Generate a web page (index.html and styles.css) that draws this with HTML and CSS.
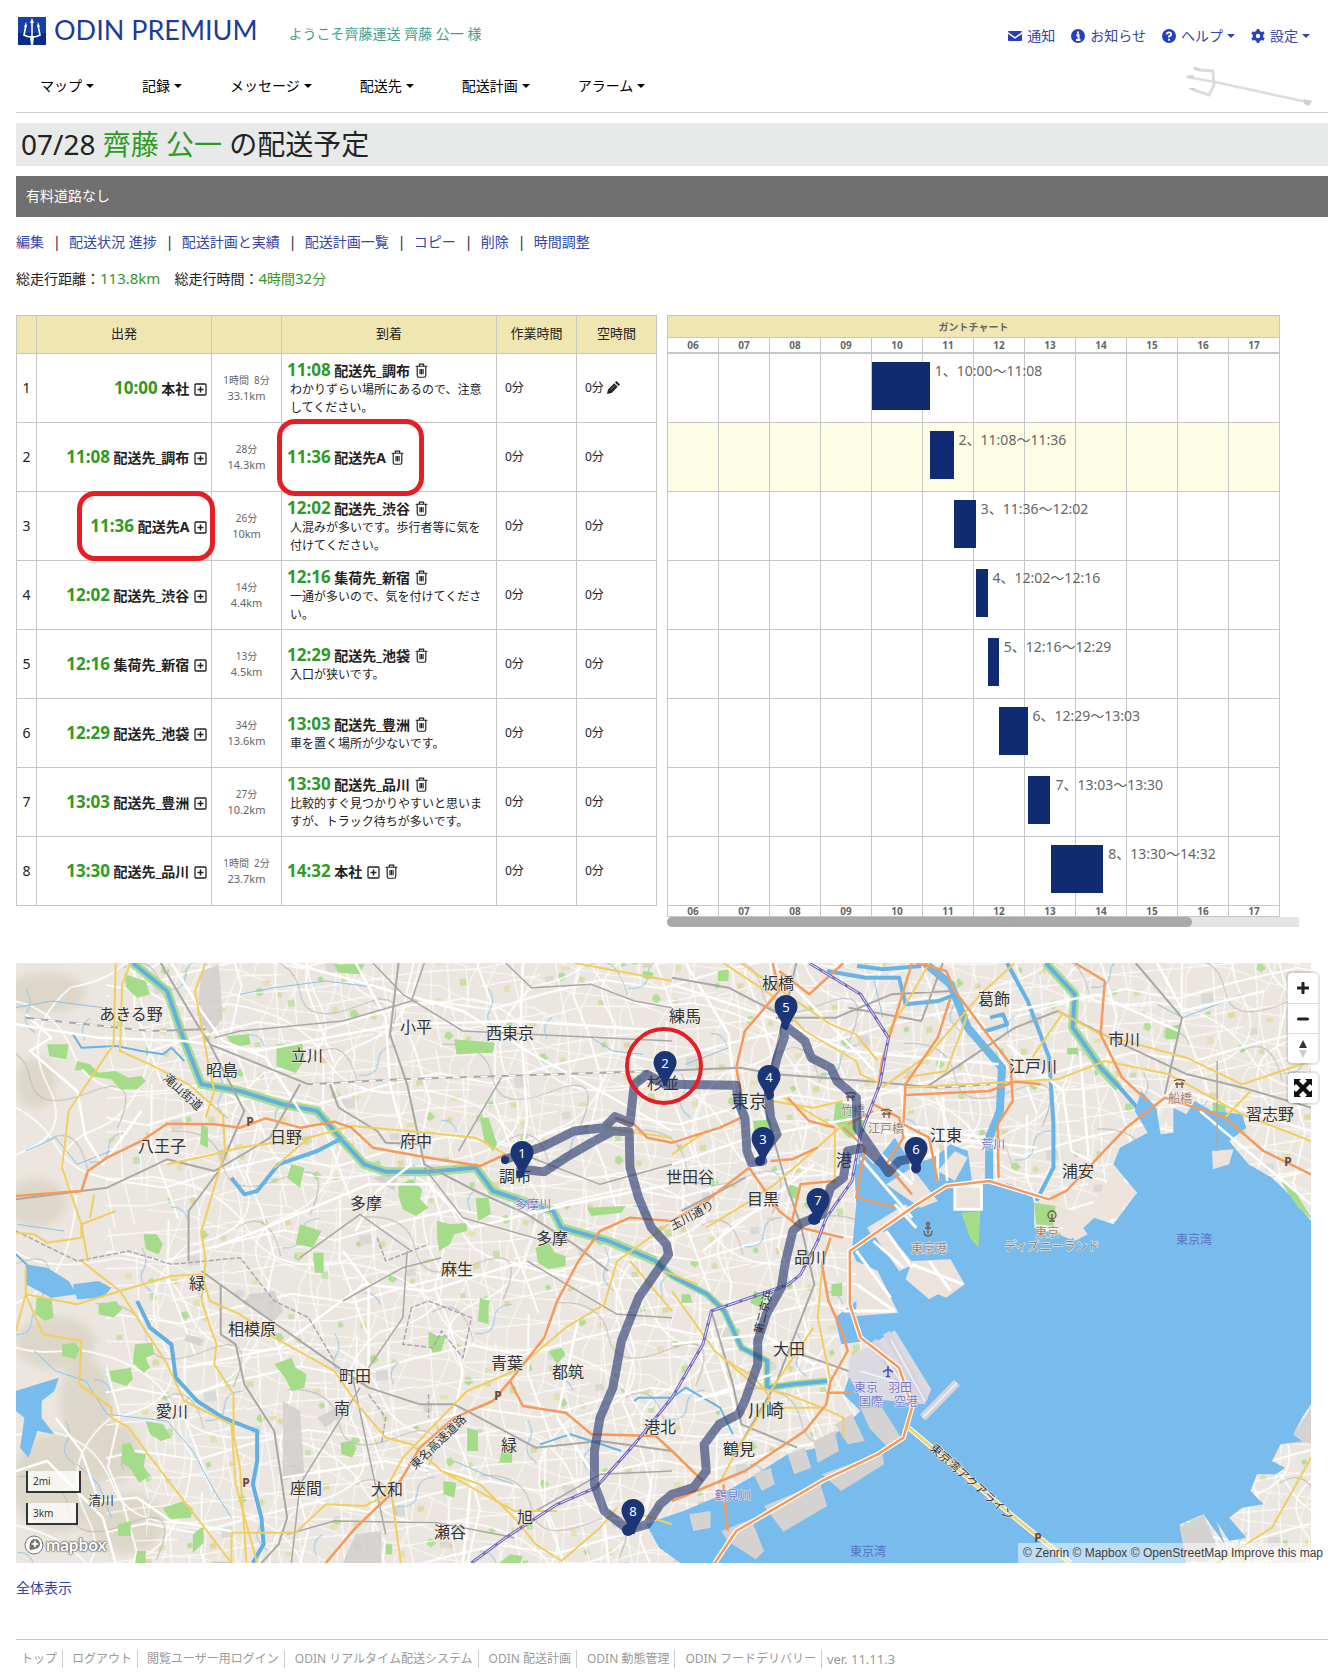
FILE: index.html
```html
<!DOCTYPE html>
<html lang="ja">
<head>
<meta charset="utf-8">
<title>ODIN PREMIUM 配送予定</title>
<meta name="viewport" content="width=device-width, initial-scale=1">
<link rel="stylesheet" href="styles.css">
</head>
<body>
<svg class="defs" aria-hidden="true">
  <symbol id="plus" viewBox="0 0 13 13"><rect x="1" y="1" width="11" height="11" rx="1" fill="none" stroke="currentColor" stroke-width="1.3"/><path d="M6.500 3.500v6M3.500 6.500h6" stroke="currentColor" stroke-width="1.500"/></symbol>
  <symbol id="trash" viewBox="0 0 12 14"><path d="M.5 3h11M4 3V1h4v2M2 3v8.500q0 1.800 1.500 1.800h5q1.500 0 1.500-1.800V3M4.600 5.500v5M6 5.500v5M7.500 5.500v5" fill="none" stroke="currentColor" stroke-width="1.100"/></symbol>
  <symbol id="pin" viewBox="0 0 26 40"><path d="M13 1a11.500 11.500 0 0 1 11.500 11.500C24.500 20 17 25 14.500 36h-3C9 25 1.500 20 1.500 12.500A11.500 11.500 0 0 1 13 1z" fill="#1b3576"/></symbol>
</svg>
<div class="page">
  <header>
    <div class="topbar">
      <a class="logo" href="#">
        <svg width="28" height="28" viewBox="0 0 28 28"><rect width="28" height="28" fill="#1740a6"/><path d="M0 16h28v12H0z" fill="#0b2c86"/><path d="M14 3v25M8 8l-2 10q3 2 8 2 5 0 8-2L20 8" fill="none" stroke="#fff" stroke-width="1.600"/><path d="M14 1l-2 5h4zM8 5l-2 5h3zM20 5l2 5h-3zM12 20h4l-1 8h-2z" fill="#fff"/></svg>
        <span>ODIN PREMIUM</span>
      </a>
      <p class="welcome">ようこそ齊藤運送 齊藤 公一 様</p>
      <nav class="tools" aria-label="ユーザー">
        <a href="#"><svg width="14" height="12" viewBox="0 0 14 12"><path d="M1 1h12q1 0 1 1L7 7 0 2q0-1 1-1zM0 4l7 4.800L14 4v6q0 1-1 1H1q-1 0-1-1z" fill="#263fc0"/></svg>通知</a>
        <a href="#"><svg width="14" height="14" viewBox="0 0 14 14"><circle cx="7" cy="7" r="7" fill="#263fc0"/><path d="M7 2.500v2.200M5.300 6.200H7.600v4.600M5 11h4.500" stroke="#fff" stroke-width="1.900" fill="none"/></svg>お知らせ</a>
        <button type="button"><svg width="14" height="14" viewBox="0 0 14 14"><circle cx="7" cy="7" r="7" fill="#263fc0"/><path d="M4.700 5.300Q4.900 3.300 7 3.300T9.300 5.300Q9.300 6.500 7 7.400V8.500M7 9.700v2" stroke="#fff" stroke-width="1.800" fill="none"/></svg>ヘルプ<i class="caret"></i></button>
        <button type="button"><svg width="14" height="14" viewBox="0 0 14 14"><circle cx="7" cy="7" r="3.800" fill="none" stroke="#263fc0" stroke-width="3.200"/><path d="M7 0v3M7 11v3M1 3.500l2.500 1.500M10.500 9l2.500 1.500M1 10.500L3.500 9M10.500 5L13 3.500" stroke="#263fc0" stroke-width="2.800"/></svg>設定<i class="caret"></i></button>
      </nav>
    </div>
    <nav class="menu" aria-label="メイン">
      <button type="button">マップ<i class="caret"></i></button>
      <button type="button">記録<i class="caret"></i></button>
      <button type="button">メッセージ<i class="caret"></i></button>
      <button type="button">配送先<i class="caret"></i></button>
      <button type="button">配送計画<i class="caret"></i></button>
      <button type="button">アラーム<i class="caret"></i></button>
      <svg class="trident" width="128" height="40" viewBox="0 0 128 40"><g fill="none" stroke="#dcdcdc" stroke-width="2"><path d="M9 2l6 2 13 1 1 14-5 10-15-5" stroke-width="3"/><path d="M2 11l28 5 92 20" stroke="#e0dcdc" stroke-width="2.500"/></g><path d="M0 10l9-1-2 4zM3 22l8 0-3 3zM8 1l8 2-4 2z" fill="#cfcfcf"/><path d="M119 33l8 2-3 5-5-2z" fill="#d4cfcf"/></svg>
    </nav>
  </header>

  <main>
    <h1>07/28 <span class="green">齊藤 公一</span> の配送予定</h1>
    <p class="notice">有料道路なし</p>
    <nav class="actions" aria-label="操作">
      <a href="#">編集</a><span>|</span><a href="#">配送状況 進捗</a><span>|</span><a href="#">配送計画と実績</a><span>|</span><a href="#">配送計画一覧</a><span>|</span><a href="#">コピー</a><span>|</span><a href="#">削除</a><span>|</span><a href="#">時間調整</a>
    </nav>
    <p class="totals"><span>総走行距離：<b class="green">113.8km</b></span><span>総走行時間：<b class="green">4</b><span class="green">時間</span><b class="green">32</b><span class="green">分</span></span></p>

    <div class="board">
      <table class="plan">
        <colgroup><col class="c-no"><col class="c-from"><col class="c-leg"><col class="c-to"><col class="c-min"><col class="c-min"></colgroup>
        <thead><tr><th></th><th>出発</th><th></th><th>到着</th><th>作業時間</th><th>空時間</th></tr></thead>
        <tbody>
          <tr><td class="no">1</td><td class="from"><b>10:00</b> 本社 <svg class="plus"><use href="#plus"/></svg></td><td class="leg">1時間&nbsp; 8分<br><span>33.1km</span></td><td class="to"><b>11:08</b> 配送先_調布 <svg class="trash"><use href="#trash"/></svg><p>わかりずらい場所にあるので、注意してください。</p></td><td class="min">0分</td><td class="min">0分 <svg class="pencil" width="13" height="13" viewBox="0 0 13 13"><path d="M9.500 0L13 3.500 11.500 5 8 1.500zM7.200 2.300l3.500 3.500-6.200 6.200L0 13l1-4.500z" fill="#222"/><path d="M3 9.500l5-5" stroke="#999" stroke-width=".8"/></svg></td></tr>
          <tr><td class="no">2</td><td class="from"><b>11:08</b> 配送先_調布 <svg class="plus"><use href="#plus"/></svg></td><td class="leg">28分<br><span>14.3km</span></td><td class="to"><b>11:36</b> 配送先A <svg class="trash"><use href="#trash"/></svg><i class="ring ring-to"></i></td><td class="min">0分</td><td class="min">0分</td></tr>
          <tr><td class="no">3</td><td class="from"><b>11:36</b> 配送先A <svg class="plus"><use href="#plus"/></svg><i class="ring ring-from"></i></td><td class="leg">26分<br><span>10km</span></td><td class="to"><b>12:02</b> 配送先_渋谷 <svg class="trash"><use href="#trash"/></svg><p>人混みが多いです。歩行者等に気を付けてください。</p></td><td class="min">0分</td><td class="min">0分</td></tr>
          <tr><td class="no">4</td><td class="from"><b>12:02</b> 配送先_渋谷 <svg class="plus"><use href="#plus"/></svg></td><td class="leg">14分<br><span>4.4km</span></td><td class="to"><b>12:16</b> 集荷先_新宿 <svg class="trash"><use href="#trash"/></svg><p>一通が多いので、気を付けてください。</p></td><td class="min">0分</td><td class="min">0分</td></tr>
          <tr><td class="no">5</td><td class="from"><b>12:16</b> 集荷先_新宿 <svg class="plus"><use href="#plus"/></svg></td><td class="leg">13分<br><span>4.5km</span></td><td class="to"><b>12:29</b> 配送先_池袋 <svg class="trash"><use href="#trash"/></svg><p>入口が狭いです。</p></td><td class="min">0分</td><td class="min">0分</td></tr>
          <tr><td class="no">6</td><td class="from"><b>12:29</b> 配送先_池袋 <svg class="plus"><use href="#plus"/></svg></td><td class="leg">34分<br><span>13.6km</span></td><td class="to"><b>13:03</b> 配送先_豊洲 <svg class="trash"><use href="#trash"/></svg><p>車を置く場所が少ないです。</p></td><td class="min">0分</td><td class="min">0分</td></tr>
          <tr><td class="no">7</td><td class="from"><b>13:03</b> 配送先_豊洲 <svg class="plus"><use href="#plus"/></svg></td><td class="leg">27分<br><span>10.2km</span></td><td class="to"><b>13:30</b> 配送先_品川 <svg class="trash"><use href="#trash"/></svg><p>比較的すぐ見つかりやすいと思いますが、トラック待ちが多いです。</p></td><td class="min">0分</td><td class="min">0分</td></tr>
          <tr><td class="no">8</td><td class="from"><b>13:30</b> 配送先_品川 <svg class="plus"><use href="#plus"/></svg></td><td class="leg">1時間&nbsp; 2分<br><span>23.7km</span></td><td class="to"><b>14:32</b> 本社 <svg class="plus"><use href="#plus"/></svg> <svg class="trash"><use href="#trash"/></svg></td><td class="min">0分</td><td class="min">0分</td></tr>
        </tbody>
      </table>

      <section class="gantt-pane" aria-label="ガントチャート">
        <div class="gantt">
          <h2>ガントチャート</h2>
          <div class="hours"><span>06</span><span>07</span><span>08</span><span>09</span><span>10</span><span>11</span><span>12</span><span>13</span><span>14</span><span>15</span><span>16</span><span>17</span></div>
          <div class="lane"><i style="--start:240;--len:68"></i><span>1、10:00～11:08</span></div>
          <div class="lane current"><i style="--start:308;--len:28"></i><span>2、11:08～11:36</span></div>
          <div class="lane"><i style="--start:336;--len:26"></i><span>3、11:36～12:02</span></div>
          <div class="lane"><i style="--start:362;--len:14"></i><span>4、12:02～12:16</span></div>
          <div class="lane"><i style="--start:376;--len:13"></i><span>5、12:16～12:29</span></div>
          <div class="lane"><i style="--start:389;--len:34"></i><span>6、12:29～13:03</span></div>
          <div class="lane"><i style="--start:423;--len:27"></i><span>7、13:03～13:30</span></div>
          <div class="lane"><i style="--start:450;--len:62"></i><span>8、13:30～14:32</span></div>
          <div class="hours foot"><span>06</span><span>07</span><span>08</span><span>09</span><span>10</span><span>11</span><span>12</span><span>13</span><span>14</span><span>15</span><span>16</span><span>17</span></div>
        </div>
        <div class="scroll"><i></i></div>
      </section>
    </div>

    <section class="map" aria-label="地図">
      <svg class="canvas" viewBox="0 0 1295 600" preserveAspectRatio="xMidYMid slice">
        <defs>
          <pattern id="streets" width="173" height="137" patternUnits="userSpaceOnUse" patternTransform="rotate(-7)">
            <g fill="none" stroke="#fff"><path stroke-width="1.800" d="M0 30L60 24 110 40 173 30M40 0L48 50 30 100 40 137M120 0L112 60 130 137M0 95L60 88 120 104 173 95"/><path stroke-width="1" d="M0 60L50 58 112 62 173 58M20 0L16 60 20 137M84 24L80 88 86 137M150 0L146 70 152 137M60 0L62 24M0 118L40 112 100 120 173 114M48 40L90 44M100 60L98 100M112 80L173 76M0 10L60 8 173 12M62 88L66 137"/></g>
            <path d="M70 48h7v5h-7zM22 70h8v4h-8zM135 82h6v7h-6z" fill="#e5dfb4"/><path d="M92 70h7v7h-7zM54 108h6v5h-6z" fill="#c9dfae"/><path d="M134 38h12v10h-12zM4 78h9v7h-9z" fill="#dbd9d5"/>
          </pattern>
          <pattern id="blocks" width="97" height="83" patternUnits="userSpaceOnUse" patternTransform="rotate(13)">
            <path d="M0 14L30 10 60 18 97 14M22 10L26 40 18 83M18 0L22 10M60 18L64 60 58 83M0 44L26 40 62 46 97 44M42 13L40 42M80 16L84 44 76 83M0 66L22 64 62 70 97 66M58 0L60 18M76 0L80 16" fill="none" stroke="#fbfaf8" stroke-width="1"/>
            <path d="M28 24l6-2 2 5-6 3zM68 52l5 1-1 5-5-1z" fill="#ded9a6"/><path d="M46 54l4-2 5 4-4 5-5-2zM6 30l4-3 3 4-4 3z" fill="#b4dd98"/>
          </pattern>
          <pattern id="lanes" width="211" height="189" patternUnits="userSpaceOnUse" patternTransform="rotate(24)">
            <path d="M0 40Q50 20 90 60T211 40M60 0Q30 60 80 100T60 189M150 0Q180 80 140 120T150 189M0 140Q70 120 110 150T211 140" fill="none" stroke="#fff" stroke-width="1.500"/>
            <path d="M0 90Q40 70 60 100T120 88 160 110M100 150Q120 120 150 160" fill="none" stroke="#b8b5b2" stroke-width="1"/>
            <path d="M20 20q12 8 10 20t16 16M170 110q-16 8-10 22t-12 20M90 20q-8 12 4 22M30 160q10-6 20 4" fill="none" stroke="#8fc3e6" stroke-width="1"/>
          </pattern>
          <filter id="soft"><feGaussianBlur stdDeviation="5"/></filter>
        </defs>
        <rect width="1295" height="600" fill="#ebe6df"/>
        <g filter="url(#soft)" fill="#ddd7c9"><ellipse cx="30" cy="30" rx="40" ry="20"/><ellipse cx="20" cy="240" rx="30" ry="24"/><ellipse cx="40" cy="380" rx="40" ry="26"/><ellipse cx="70" cy="440" rx="26" ry="44"/><ellipse cx="40" cy="520" rx="44" ry="50"/><ellipse cx="110" cy="560" rx="40" ry="30"/><ellipse cx="20" cy="120" rx="20" ry="26"/><ellipse cx="100" cy="490" rx="24" ry="30"/></g>
        <rect x="130" width="1165" height="600" fill="url(#blocks)"/>
        <rect x="90" width="1205" height="600" fill="url(#streets)"/>
        <rect width="1295" height="600" fill="url(#lanes)"/>

        <g class="geo" transform="matrix(.42857 0 0 .33333 -16 -12)">
          <g fill="#cfcdcb" opacity=".8"><path d="M470 60l40-20 10 160-30 50-30-60zM580 1030l60-10 20 60-20 30-70-50zM660 1350l40 30 10 190-50 20zM830 1750l60-10v96h-90zM435 1150l40 15-5 20-40-15zM740 1400l60-40 10 20-50 50zM870 680l60-20-10 60z"/></g>
          <g fill="#a5dc89">
            <path d="M290 70l50 20 10 40-30 10-25-30zM110 280l50 0-5 45-40-10zM180 330l30 10 20 25 40-5 30 20 30-5 10 15-20 25-40 0-20-30-50-10-15-20-20 5zM530 255l50-5 5 30-40 8zM645 280l60-4 5 50-20 40-45-20zM1060 265l95 10-5 30-85 5zM780 40l70 0-10 30-50-5zM470 520l15 10v60l-18-10zM680 640l30 10-10 60-30-30zM930 700l30-15 25 30-5 30 20 25-30 25-30-20-10-40zM700 820l50 20-20 50-40-10zM1020 810l30 10 40-5 0 25-30 10-10 30-25 20-5-40zM1110 740l30 0 5 50-30 20zM1250 890l30-15 15 30 25 10 0 30-40 10-25-20zM730 905l25 0v60h-20zM335 850l30 0 15 30-10 30-30-15zM1120 500l20 0 20 80-10 20-20-30zM1370 770l90-5-10 20-70 10z"/>
            <path d="M85 1040l35 0 5 60-20 10-22-20zM230 1060l40-10 15 25-20 25-35-10zM145 1180l30-5 12 20-12 30-30-10zM315 1180l40-5 5 35-20 10 10 30-15 15-25-30zM255 1260l50-10 5 35-15 20-35-15zM640 1240l40-20 10 30 25 20-5 40-30 10-15-40zM340 1410l40 10 20 40-25 10-25-20zM285 1480l20-5 10 30 25 5-5 35 15 30-25 20-20-40-20-20zM795 1475l25-5 12 20-10 30-25-10zM1035 1590l30 5-5 45-25-10zM1090 1430l25 10v60h-25zM1120 1040l20 10v70l-25-10zM1000 1140l20 15 20 0-10 45-20 5-10-25zM380 1670l50-20 20 25-5 25-50 5zM450 1750l25-25 0 50-25 30zM320 1800l20 0v36h-25zM1170 1500l25 5 0 30-30 0zM1190 1810l30 5-5 21-50 0zM900 1780l15 0v30h-15zM275 1720l30-10v45h-30z"/>
            <path d="M1758 510l40-5 8 50-25 10-22-15zM1950 450l60 20 10 70-40 20-35-50zM2490 290l25 0v20h-25zM2720 230l35-10-10 45-25 0zM2830 450l30 5v45l-30-15zM1940 1000l25-5v40h-25zM1760 1020l25 10-10 40-25-15zM1675 60l25-5v35h-25zM1840 700l25 10-5 35-20-10zM2060 690l20 5-10 25-20 0zM1280 1200l30-10 10 20-20 30zM1320 1250l25 0-5 25-20-5zM1590 1030l20 0 5 25-25 0zM1500 60l25 5-5 20-20-5z"/>
          </g>
          <!-- rivers -->
          <g fill="none" stroke-linejoin="round">
            <path stroke="#a9dc92" stroke-width="9" d="M310 36L390 120 430 270 470 400 560 420 660 460 740 480 800 570 850 640 900 662 1000 662 1110 650 1150 720 1290 780 1310 830 1420 870 1530 930M2440 36L2508 130 2503 230 2568 350 2610 410"/>
            <path stroke="#a9dc92" stroke-width="7" d="M1530 930L1568 975 1650 1030 1690 1080 1730 1190 1790 1230 1790 1310 1850 1300 1930 1290"/>
            <path stroke="#62b0e2" stroke-width="4" d="M310 36L390 120 430 270 470 400 560 420 660 460 740 480 800 570 850 640 900 662 1000 662 1110 650 1150 720 1290 780 1310 830 1420 870 1530 930 1568 975 1650 1030 1690 1080 1730 1190 1790 1230 1790 1310 1850 1300 1930 1290M2440 36L2508 130 2503 230 2568 350 2620 420 2680 510M320 1050L350 1130 400 1180 410 1280 460 1350 520 1400 600 1440 600 1530 590 1600 610 1700 615 1780 590 1836"/>
            <path stroke="#6fb8ea" stroke-width="8" d="M2158 36L2218 100 2258 230 2338 350 2333 480 2308 560 2308 700"/>
            <path stroke="#68b3e6" stroke-width="4" d="M2000 45L2060 55 2150 45M2350 36L2398 150 2448 320 2458 520 2458 650 2418 750M1930 60L2020 80 2098 80 2113 160 2190 150 2230 130M2310 200L2340 190 2350 220 2300 240M540 680L570 730 600 720 650 640 740 600 800 560"/>
            <path stroke="#68b3e6" stroke-width="2" d="M170 250L190 290 270 285 330 300 380 310 400 290 430 330M1480 1350L1490 1340 1568 1340 1600 1310 1680 1370 1710 1450M1260 1480L1330 1450 1380 1470 1450 1500M37 910L70 950 100 960"/>
            <path stroke="#8cc3e8" stroke-width="1" d="M37 170L120 150 240 170M60 600L130 560 180 640 260 600M40 820L150 840M80 1200L130 1260 200 1290 250 1390 390 1410 450 1500 500 1620 540 1700M560 130L640 110 760 90 880 110M1380 260L1430 300 1500 310M180 1540L230 1600 260 1700M1060 1530L1130 1570 1200 1600M2040 90L2060 200M1600 340L1700 290M2700 160L2760 200 2900 130"/>
          </g>
          <!-- bay and lakes -->
          <g fill="#78bbed">
            <path d="M60 940l50 10 50 40 20 40-60 10-60-40zM170 1000l60-10 30 20-20 30-60 5zM37 1320l50-20 50-20-10 40-30 30 0 50 30 50-40-10-20 80-20-30 10-90-20-20z"/>
            <path transform="translate(1568 0)" d="M425 650L440 600 470 640 520 560 560 640 610 620 650 580 690 600 700 690 750 690 790 700 840 730 850 790 845 830 900 850 930 865 985 800 1030 820 1085 725 1030 640 1045 590 1110 545 1080 480 1095 420 1130 470 1140 550 1170 545 1170 470 1200 490 1220 450 1260 480 1330 490 1340 530 1300 570 1345 640 1400 680 1440 730 1491 810V1360L1470 1400 1450 1450 1470 1470 1420 1480 1400 1530 1430 1550 1410 1570 1365 1570 1350 1620 1380 1660 1330 1670 1300 1700 1340 1760 1300 1770 1270 1710 1290 1780 1240 1690 1185 1720 1200 1836H20L-30 1790-60 1720-20 1700 27 1680 100 1640 190 1575 270 1510 340 1490 390 1440 440 1380 400 1330 420 1250 470 1200 450 1170 395 1180 380 1100 430 1050 440 960 420 900 430 760z"/>
          </g>
          <g transform="translate(1568 0)">
            <g fill="#ece4dc"><path d="M455 830l90-70 15 20-90 80zM470 850l30-10 65 100-35 20zM545 985l15-55 90-5 33 75-43 40-20-10-20 15zM845 750l55 15 85 35-55 65-20-40-65-5zM1260 600l50-5-10 45-38 15zM430 930l50 30 48 125-98 10zM500 700l60-50 60 100-40 20zM620 660l40-60 30 20-30 70zM660 705l62-5-2 75-60 2zM1030 660l55 65-60 80-50-30zM900 780l30 0 40 70-30 20z"/></g>
            <g fill="#d5d3d2"><path d="M215 1665l130-70 17 70-102 77zM350 1570l140-65 5 35-100 80zM115 1740l70-35 30 95-20 25-65-55zM330 1470l50-30 10 60-50 35zM270 1510l40-20 15 60-40 20zM190 1570l40-20 10 50-30 20zM440 1370l50 0 50 100-40 15-40-55zM1450 1450l41-80v110zM1185 1730l55-40 30 90-20 50h-50zM40 1690l50-10 0 50-40 10zM380 1420l40-30 30 80-40 10z"/></g>
            <path d="M415 1220l105-82 85 177-15 45-150-20-30-70z" fill="#dbd9e2"/><path d="M585 1400L665 1295M590 1350L500 1145M560 1340L470 1170" fill="none" stroke="#d5d3de" stroke-width="8"/><path d="M585 1400L665 1295M590 1350L510 1165M560 1340L480 1190M540 1300L440 1260" fill="none" stroke="#f4f3f6" stroke-width="1.500"/>
            <path d="M845 755l50 10-5 60-40-5zM675 785l45-5-5 110-20-30zM1420 690l30 20 41 90-30-30z" fill="#a5dc89"/>
            <path d="M470 870l70 80M500 840l60 110M560 940l120 60M600 930l50 90M440 620L560 800M480 600l80 100M660 705h62v70h-62zM520 760l50 70M400 1080l120 0M430 1000l90 80M620 590v100M430 900l80 140" fill="none" stroke="#fff" stroke-width="3"/>
          </g>
          <!-- white arterials -->
          <g fill="none" stroke="#fff" stroke-width="2.500"><path d="M37 220L230 260 430 270 600 300 930 220 1210 210 1568 240M60 190L120 260 70 300 180 420 200 560 240 640 330 480M400 36L470 180 520 270 620 320 720 520M680 36L1080 180 1230 300 1400 420 1568 540M830 36L900 200 910 400 960 640 880 720 830 840M1220 36L1215 220 1230 500 1210 680M500 890L620 830 860 700 1000 700 1100 830 1330 760 1568 700M430 1250L650 1190 850 1000 1000 1020 1200 940 1400 1000M130 1400L190 1500 230 1650 320 1640 400 1710 540 1740M37 1560L110 1530 240 1700 270 1836M1420 1836L1400 1600 1300 1400 1350 1100M660 1580L900 1530 1000 1560M1080 1836L1100 1580 980 1540M860 1260L860 1000 800 900"/><path d="M1568 100L1800 200 1980 300 2330 340M1600 36L1700 250 1720 500M1800 36L2040 360M1568 640L1750 560 2000 500 2300 560M1640 900L1900 640M2000 400V640M2100 400L2130 690M2200 420L2210 690M2040 540L2420 590M2350 280L2480 420 2500 600 2560 640M2360 180L2560 130 2750 240M2700 36L2760 180 2950 120M1568 1180L1780 1150 1900 1240M1620 1350L1800 1270M1650 1100L1700 1300 1740 1500M2520 300L2540 620M2760 420L3059 540M2800 480L3059 760"/></g>
          <!-- railways -->
          <g fill="none" stroke="#aaa8a6" stroke-width="2" stroke-linejoin="round"><path d="M37 745L250 710 390 625 500 660 580 600 630 560 700 400M60 200L130 210 350 240 480 235M375 36L460 220 490 280 720 400 930 385 1530 360 1728 350 1810 370 2020 390 2188 410 2310 400M770 400L790 470 880 540 900 575 980 580M490 280L570 480 510 660 440 780 440 930M930 36L910 250 950 400 990 640 1110 720 1230 790 1340 880 1420 960M470 960L600 1080 790 1250 860 1310 980 1360 1060 1360 1250 1490 1400 1470 1568 1500M515 1000L515 1150 550 1180 570 1300 640 1440 670 1700 650 1780 610 1836"/><path stroke-width="1.500" d="M500 260L560 240 800 210 960 150 990 36M870 36L940 130 1080 240 1568 270M1170 380L1070 600M990 650L1080 800 1300 880M840 1310L700 1600 680 1836M670 1750L780 1710 1020 1715 1200 1760M1568 1560L1400 1570 1250 1680M800 1050L940 950 1030 920M700 920L840 790 960 900M1180 36L1240 110 1380 100 1480 150 1568 170M1200 600L1400 700 1568 640M2840 330L2840 600M820 1260L900 1750M1230 930L1440 1090 1568 1100M860 1250L940 1100 950 900"/><path d="M1858 36L1810 300 1780 450 1835 700 1868 820 1900 1000 1810 1300 1718 1500M2160 410L2368 230 2468 180 2620 280 2770 370 2900 410 3059 470M2650 36L2758 200 2718 430M1810 200L1950 200 2080 130 2220 120M1980 170L2150 210 2200 36M1568 80L1700 110 1850 210M1590 780L1740 680M1660 1080L1710 1300 1730 1420 1860 1490M1870 1210L1980 1260"/></g>
          <path d="M80 204L130 210 350 240 400 240M730 400L930 385 1530 360M2188 410L2310 400" fill="none" stroke="#fff" stroke-width="1.500" stroke-dasharray="7 7"/>
          <path d="M37 840L100 880 180 930 300 900 400 940 560 920 640 1050 720 1100 780 1230M960 1070L940 1180 1010 1190 1030 1140 1080 1220 1100 1100 1000 1050 960 1070M880 860L900 930 1000 880M860 1330L900 1400 890 1480M1000 1330L1000 1400" fill="none" stroke="#a9a7b4" stroke-width="1.500" stroke-dasharray="5 2"/>
          <!-- national roads -->
          <g fill="none" stroke="#f0cf60" stroke-width="2" stroke-linejoin="round">
            <path d="M270 36L265 280 160 480 145 650 190 820 205 930M305 36L285 100 280 300 350 340 440 400 520 490 525 600 470 840 480 930 470 1050 505 1180 500 1240 545 1330 545 1450 560 1550 575 1836M480 36L455 120 485 330 500 420 480 500M37 845L80 850 110 875 190 860 190 820 270 780M37 1140L60 1030 180 1060 280 1020 400 975 470 970 490 1050 560 1090 640 1160 780 1260 840 1370 900 1460 960 1480 1030 1560 1200 1680 1300 1680M190 930L280 1020 390 1240 430 1350 540 1420 550 1600 600 1836M60 950L60 1030 100 1150 190 1170 185 1300 260 1370 260 1400 300 1430 340 1500 540 1836 540 1745 690 1745 760 1660 850 1665 890 1640 940 1520 1000 1440 1090 1320 1200 1260 1320 1130 1410 1060 1440 930M1030 1560L1120 1600 1200 1700 1250 1780 1310 1830 1400 1730 1440 1670M390 640L500 610 560 590 720 560 820 525 1000 545 1110 560 1180 610M1430 535L1568 560M220 730L210 800M1470 1680L1568 1720M1340 36L1568 90M1440 930L1560 820M640 650L720 560M915 1640L935 1836M1470 930L1568 1080"/>
            <path transform="translate(1568 0)" d="M120 36L230 130 310 240 430 330 440 370 490 400M160 36L370 220 430 250 480 330M800 36L720 130 600 310 490 410M500 250L560 130 600 36M540 410L900 385 1010 330 1160 370 1330 490 1491 570M540 380L640 360 690 190M900 180L1000 250 1200 320 1330 400 1491 330M910 190L840 320M230 450L330 470 400 450M400 520L330 600 240 700 170 760 80 830M0 1020L100 1200 200 1310 270 1330 350 1370M-20 960L60 1000M350 960L340 1100 370 1290M180 1260L230 1340 150 1500 110 1600M230 1320L330 1130M1400 1730L1491 1520M1270 1836L1400 1730M350 1370L400 1400 400 1460M0 610L80 540M260 440L380 530 380 700M260 1370H350M130 1230L180 1270M1290 500L1350 420"/>
          </g>
          <!-- expressways -->
          <g fill="none" stroke="#fff" stroke-width="5"><path transform="translate(1568 0)" d="M100 1836L150 1740 350 1590 480 1510 540 1460 560 1370 530 1250 440 1160 415 1060 415 900 560 770 640 705 740 690 880 745"/><path d="M2120 1430L2368 1700 2498 1836"/></g>
          <g fill="none" stroke="#f69a5c" stroke-width="2.500" stroke-linejoin="round">
            <path d="M37 735L190 720 205 660 250 620 330 570 390 518 500 520 560 530 620 502 700 530 780 512 820 530 870 590 1000 620 1120 645 1180 610M1435 500L1480 520 1510 560 1568 575 1680 530 1730 500M760 1836L830 1730 920 1620 980 1490 1060 1400 1150 1350 1190 1290 1270 1160 1300 1050 1350 930 1400 840 1470 800 1568 810 1648 750 1748 650M1190 1290L1220 1365 1320 1385 1380 1450 1530 1455 1568 1500 1640 1590"/>
            <path transform="translate(1568 0)" d="M100 1836L150 1740 350 1590 480 1510 540 1460 560 1370 530 1250 440 1160 415 1060 415 900 560 770 640 705 740 690 880 745 920 720 1060 530 1150 440 1290 500 1380 600 1491 670M235 36L250 120 170 240 150 350 165 450M400 36L320 130 250 60M570 36L640 60 660 120 730 240 790 340 795 450 760 520 762 680M650 140L620 260 545 400 540 520 600 560 620 690M940 36L1010 90 1000 250 1050 380 1110 450M545 432L740 420 800 392 860 400M370 860L350 940 365 1050 400 1150 410 1200 370 1290 360 1360 310 1440 170 1560 0 1650M180 650L250 780 300 830 400 860M230 630L280 625 340 590M380 530L320 510 270 440M400 530L450 590 430 740 520 770M470 460L530 500 540 560 500 640 560 730M280 810L300 700 380 690M120 1600L130 1740M360 1325H420M560 36L490 330 480 420M410 520L470 480"/>
          </g>
          <path d="M2120 1430L2368 1700 2498 1836" fill="none" stroke="#edd277" stroke-width="3"/>
          <path d="M1888 36L2008 130 2073 260 2053 400 2008 550 1988 690 1928 800 1908 870 1868 970 1840 1000 1660 1080 1640 1180 1568 1340 1480 1480 1390 1610 1300 1660 1180 1760 1100 1836" fill="none" stroke="#706bc0" stroke-width="3"/>
          <path d="M1888 36L2008 130 2073 260 2053 400 2008 550 1988 690 1928 800 1908 870 1868 970 1840 1000 1660 1080 1640 1180 1568 1340 1480 1480 1390 1610 1300 1660 1180 1760 1100 1836" fill="none" stroke="#e6e4f4" stroke-width="1" stroke-dasharray="12 3"/>
        </g>

        <g class="places">
          <text x="115" y="57">あきる野</text><text x="400" y="70">小平</text><text x="494" y="76">西東京</text><text x="669" y="59">練馬</text><text x="762" y="26">板橋</text><text x="978" y="42">葛飾</text><text x="1108" y="82">市川</text><text x="1017" y="109">江戸川</text><text x="291" y="98">立川</text><text x="206" y="113">昭島</text><text x="647" y="126">杉並</text><text class="big" x="733" y="145">東京</text><text x="930" y="178">江東</text><text x="1254" y="157">習志野</text><text x="270" y="180">日野</text><text x="146" y="189">八王子</text><text x="400" y="184">府中</text><text x="828" y="203">港</text><text x="1062" y="214">浦安</text><text x="499" y="219">調布</text><text x="674" y="220">世田谷</text><text x="747" y="242">目黒</text><text x="350" y="246">多摩</text><text x="536" y="281">多摩</text><text x="794" y="300">品川</text><text x="441" y="312">麻生</text><text x="181" y="326">緑</text><text x="236" y="372">相模原</text><text x="339" y="419">町田</text><text x="773" y="392">大田</text><text x="491" y="406">青葉</text><text x="552" y="415">都筑</text><text x="326" y="451">南</text><text x="156" y="454">愛川</text><text class="big" x="750" y="454">川崎</text><text x="644" y="470">港北</text><text x="723" y="492">鶴見</text><text x="493" y="488">緑</text><text x="290" y="531">座間</text><text x="371" y="532">大和</text><text class="mid" x="85" y="542">清川</text><text x="434" y="575">瀬谷</text><text x="509" y="560">旭</text>
        </g>
        <g class="places small brown"><text x="837" y="152">竹橋</text><text x="870" y="170">江戸橋</text><text x="1164" y="140">船橋</text><text x="913" y="290">東京港</text><text x="1031" y="274">東京</text><text x="1036" y="288">ディズニーランド</text></g>
        <g class="places small violet"><text x="977" y="186">荒川</text><text x="517" y="246">多摩川</text><text x="717" y="537">鶴見川</text><text x="850" y="429">東京</text><text x="884" y="429">羽田</text><text x="855" y="443">国際</text><text x="890" y="443">空港</text></g>
        <g class="places small sea"><text x="1178" y="281">東京湾</text><text x="852" y="593">東京湾</text></g>
        <g class="places small"><text transform="translate(164 132) rotate(42)">滝山街道</text><text transform="translate(678 256) rotate(-28)">玉川通り</text><text transform="translate(425 482) rotate(-44)">東名高速道路</text><text transform="translate(953 522) rotate(42)">東京湾アクアライン</text></g>
        <g class="parking"><text x="234" y="163">P</text><text x="482" y="437">P</text><text x="230" y="524">P</text><text x="1272" y="203">P</text><text x="1022" y="579">P</text></g>
        <g fill="none" stroke="#715a48" stroke-width="1.300"><path d="M912 262v9M909 265h6M908 268q0 5 4 5t4-5"/><circle cx="912" cy="261" r="1.500"/><circle cx="1036" cy="252" r="4"/><path d="M1036 251v7M1033 258h6M829 131q5-3 11 0M830 134h9M832 132v6M837 132v6M865 148q5-3 11 0M866 151h9M868 149v6M873 149v6M1158 118q5-3 11 0M1159 121h9M1161 119v6M1166 119v6"/></g>
        <path d="M872 403v11M867 409l5-3 5 3M870 414l2-1 2 1" fill="none" stroke="#4350c0" stroke-width="1.500"/>

        <g class="geo route" transform="matrix(.42857 0 0 .33333 -16 -12)">
          <path d="M1180 625L1270 585 1340 540 1410 530 1435 497 1470 515M1215 655L1270 662 1320 620 1380 575 1430 540 1468 542M1470 515L1480 400 1510 370 1552 400 1718 403 1723 455 1738 500 1743 600 1753 635 1780 630M1783 600L1813 550 1798 500 1793 430 1813 320 1830 260 1830 230M1838 230L1878 270 1893 320 1938 350 1953 390 1998 440 2000 530 2038 600 2073 665 2098 630 2138 620 2138 655M2060 640L2018 590 1978 600 1968 680 1938 710 1918 790 1868 818 1850 840 1833 930 1823 1010 1788 1090 1768 1170 1768 1240 1738 1350 1723 1390 1678 1420 1643 1480 1648 1560 1618 1610 1568 1630 1540 1660 1510 1720 1470 1735M1468 542L1470 650 1490 740 1520 830 1555 880 1560 910 1490 1040 1450 1170 1430 1310 1400 1400 1387 1500 1387 1600 1410 1680 1460 1730"/>
        </g>
        <g fill="#1b3576"><circle cx="489" cy="197" r="4"/><circle cx="504" cy="211" r="4"/><circle cx="744" cy="198" r="5"/><circle cx="754" cy="132" r="4"/><circle cx="769" cy="62" r="4"/><circle cx="900" cy="205" r="5"/><circle cx="798" cy="256" r="6"/><circle cx="612" cy="567" r="6"/></g>
        <text class="onroute" transform="translate(751 350) rotate(-76)">第二京浜</text>
        <g class="pins">
          <use href="#pin" x="493" y="177" width="26" height="40"/><text x="506" y="195">1</text>
          <use href="#pin" x="636" y="87" width="26" height="40"/><text x="649" y="105">2</text>
          <use href="#pin" x="734" y="163" width="26" height="40"/><text x="747" y="181">3</text>
          <use href="#pin" x="740" y="101" width="26" height="40"/><text x="753" y="119">4</text>
          <use href="#pin" x="757" y="31" width="26" height="40"/><text x="770" y="49">5</text>
          <use href="#pin" x="887" y="173" width="26" height="40"/><text x="900" y="191">6</text>
          <use href="#pin" x="789" y="224" width="26" height="40"/><text x="802" y="242">7</text>
          <use href="#pin" x="604" y="535" width="26" height="40"/><text x="617" y="553">8</text>
        </g>
        <circle cx="648" cy="103" r="37" fill="none" stroke="#e71d26" stroke-width="4"/>
      </svg>
      <div class="controls">
        <div class="group">
          <button type="button" aria-label="拡大"><svg width="12" height="12" viewBox="0 0 12 12"><path d="M6 1v10M1 6h10" stroke="#222" stroke-width="3" stroke-linecap="round"/></svg></button>
          <button type="button" aria-label="縮小"><svg width="12" height="12" viewBox="0 0 12 12"><path d="M1.500 6h9" stroke="#222" stroke-width="3" stroke-linecap="round"/></svg></button>
          <button type="button" aria-label="北を上にする"><svg width="10" height="18" viewBox="0 0 10 18"><path d="M5 0l4 8H1z" fill="#333"/><path d="M5 18l4-8H1z" fill="#ccc"/></svg></button>
        </div>
        <div class="group">
          <button type="button" aria-label="全画面"><svg width="18" height="18" viewBox="0 0 18 18"><path d="M0 0h7L5 2l4 4 4-4-2-2h7v7l-2-2-4 4 4 4 2-2v7h-7l2-2-4-4-4 4 2 2H0v-7l2 2 4-4-4-4-2 2z" fill="#111"/></svg></button>
        </div>
      </div>
      <div class="scales"><span class="mi">2mi</span><span class="km">3km</span>
        <a class="mapbox" href="#"><svg width="20" height="20" viewBox="0 0 20 20"><circle cx="10" cy="10" r="9" fill="#fff" stroke="#77746f"/><circle cx="11" cy="9" r="5" fill="#77746f"/><path d="M6 15q-2-5 2-9l6 6q-3 3-8 3z" fill="#77746f"/><path d="M11 5l1.300 2.700L15 9l-2.700 1.300L11 13l-1.300-2.700L7 9l2.700-1.300z" fill="#fff"/></svg><span>mapbox</span></a>
      </div>
      <p class="credit"><a href="#">© Zenrin</a> <a href="#">© Mapbox</a> <a href="#">© OpenStreetMap</a> <a href="#">Improve this map</a></p>
    </section>
    <p class="all"><a href="#">全体表示</a></p>
  </main>

  <footer>
    <a href="#">トップ</a><a href="#">ログアウト</a><a href="#">閲覧ユーザー用ログイン</a><a href="#">ODIN リアルタイム配送システム</a><a href="#">ODIN 配送計画</a><a href="#">ODIN 動態管理</a><a href="#">ODIN フードデリバリー</a><span>ver. 11.11.3</span>
  </footer>
</div>
</body>
</html>
```
FILE: styles.css
```css
* { box-sizing: border-box; }
body {
  margin: 0;
  background: #fff;
  color: #222;
  font: 14px/20px "Noto Sans", "Noto Sans CJK JP", sans-serif;
}
p, h1, h2 { margin: 0; font-weight: normal; }
a { color: #3347a5; text-decoration: none; }
button { border: 0; padding: 0; background: none; font: inherit; color: inherit; cursor: pointer; }
.defs { display: none; }
.page { padding: 0 16px; }
.green { color: #2f9a24; font-weight: normal; }
.caret {
  display: inline-block;
  margin-left: 4px;
  border: 4px solid transparent;
  border-top-color: currentColor;
  border-bottom: 0;
  vertical-align: 3px;
}

/* header */
.topbar { display: flex; align-items: center; height: 62px; padding: 0 18px 0 2px; }
.logo { display: flex; align-items: center; gap: 8px; color: #1c3c9c; font: 27px/28px Lato, sans-serif; }
.logo span { padding-bottom: 2px; }
.welcome { margin-left: 31px; padding-top: 5px; color: #3f9f92; }
.tools { display: flex; gap: 16px; margin-left: auto; padding-top: 10px; color: #3347a5; }
.tools a, .tools button { display: flex; align-items: center; }
.tools svg { margin-right: 5px; }
.menu { display: flex; align-items: center; height: 51px; padding-bottom: 2px; color: #000; border-bottom: 1px solid #ccc; }
.menu button { padding: 0 24px; }
.trident { margin-left: auto; margin-right: 15px; }

h1 { height: 43px; margin-top: 10px; padding-left: 5px; background: #e8eaea; font-size: 28px; line-height: 43px; }
.notice { height: 41px; margin-top: 10px; padding-left: 10px; background: #707070; color: #fff; line-height: 40px; }
.actions { display: flex; gap: 9px; margin-top: 15px; }
.actions span { width: 7px; text-align: center; }
.totals { display: flex; gap: 14px; margin-top: 16px; }
.totals b { font-size: 15px; }

/* plan table */
.board { display: grid; grid-template-columns: 641fr 632fr; gap: 10px; align-items: start; margin-top: 26px; padding-right: 29px; }
.plan { width: 100%; table-layout: fixed; border-collapse: collapse; }
.c-no { width: 20px; }
.c-from { width: 175px; }
.c-leg { width: 70px; }
.c-min { width: 80px; }
.plan th, .plan td { position: relative; padding: 0; border: 1px solid #c6c6c6; }
.plan th { height: 38px; padding-bottom: 4px; background: #f0e6b2; font-size: 13px; font-weight: normal; }
.plan td { height: 69px; }
.plan .no { text-align: center; }
.plan .from { padding-right: 4px; text-align: right; font-weight: bold; }
.plan .leg { color: #666; font-size: 10px; line-height: 15px; text-align: center; }
.leg span { font-size: 11px; }
.plan .to { padding-left: 5px; font-weight: bold; }
.plan b { color: #2f9a24; font-size: 17px; font-weight: 700; }
.to p { margin: 0 6px 0 3px; font-size: 12px; font-weight: normal; line-height: 18px; }
.plan .min { padding-left: 8px; font-size: 12px; }
.plus { width: 13px; height: 13px; margin-left: 1px; vertical-align: -2px; }
.trash { width: 13px; height: 15px; margin-left: 1px; vertical-align: -2px; }
.pencil { vertical-align: -2px; }
.ring { position: absolute; border: 5px solid #e71d26; border-radius: 18px; pointer-events: none; z-index: 1; }
.ring-to { left: -5px; top: -4px; width: 147px; height: 77px; }
.ring-from { right: -4px; top: -1px; width: 138px; height: 70px; }

/* gantt chart */
.gantt { margin-right: 19px; border: 1px solid #c6c6c6; border-width: 1px 1px 1px 0; color: #666; }
.gantt h2 { height: 22px; border: 1px solid #c6c6c6; border-width: 0 0 1px 1px; background: #f0e6b2; font-size: 10px; font-weight: bold; line-height: 22px; text-align: center; }
.hours { display: grid; grid-template-columns: repeat(12, 1fr); height: 16px; border-bottom: 2px solid #c6c6c6; font-size: 10px; font-weight: bold; line-height: 15px; text-align: center; }
.hours span { border-left: 1px solid #c6c6c6; }
.hours.foot { height: 10px; border: 0; line-height: 11px; }
.lane {
  display: flex;
  align-items: flex-start;
  gap: 5px;
  height: 69px;
  padding-top: 8px;
  border-bottom: 1px solid #c6c6c6;
  background: linear-gradient(to right, #c6c6c6 1px, transparent 1px) 0 0 / calc(100% / 12) 100%;
  line-height: 18px;
}
.lane.current { background-color: #fefde6; }
.lane i { flex: none; width: calc(var(--len) / 720 * 100%); height: 48px; margin-left: calc(var(--start) / 720 * 100% + 1px); background: #112b72; }
.lane span { white-space: nowrap; }
.scroll { height: 10px; border-radius: 5px 0 0 5px; background: #e4e4e4; }
.scroll i { display: block; width: 83%; height: 10px; border-radius: 5px; background: #a9a9a9; }

/* map */
.map { position: relative; margin-top: 36px; }
.canvas { display: block; width: calc(100% - 17px); height: 600px; }
.geo path { vector-effect: non-scaling-stroke; }
.route path { fill: none; stroke: #25376f; stroke-width: 9px; stroke-linejoin: round; stroke-linecap: round; opacity: .62; }
.places text { fill: #333; font-size: 16px; text-anchor: middle; paint-order: stroke; stroke: #f4f1ec; stroke-width: 1px; }
.places .big { font-size: 18px; }
.places .mid { font-size: 13px; }
.places.small text { font-size: 12px; }
.places.brown text { fill: #958377; }
.places.violet text { fill: #7478c4; }
.places.sea text { fill: #5573c0; stroke: none; }
.parking text { fill: #67493a; font: bold 12px "Noto Sans", sans-serif; text-anchor: middle; }
.onroute { fill: #222a44; font-size: 11px; text-anchor: middle; }
.pins text { fill: #fff; font-size: 13px; text-anchor: middle; }
.controls { position: absolute; top: 10px; right: 10px; display: grid; gap: 10px; }
.group { border-radius: 4px; background: #fff; box-shadow: 0 0 0 2px rgba(0, 0, 0, .1); }
.group button { display: grid; place-items: center; width: 30px; height: 30px; }
.group button + button { border-top: 1px solid #ddd; }
.scales { position: absolute; left: 8px; bottom: 8px; display: flex; flex-direction: column; align-items: flex-start; }
.scales > span { height: 22px; margin: 0 0 10px 2px; padding-left: 5px; border: 2px solid #333; border-top: 0; background: rgba(255, 255, 255, .75); color: #333; font-size: 10px; }
.scales .mi { width: 55px; }
.scales .km { width: 52px; }
.mapbox { display: flex; align-items: center; gap: 2px; color: #fff; font: bold 17px/20px Lato, sans-serif; text-shadow: 0 0 1px #555, 0 0 2px #555, 0 0 2px #555; }
.credit { position: absolute; right: 0; bottom: 0; padding: 0 5px; background: rgba(255, 255, 255, .5); font: 12px/20px "Liberation Sans", sans-serif; }
.credit a { color: #404040; }
.all { margin-top: 15px; }

footer { display: flex; margin-top: 41px; padding: 10px 0 8px; border-top: 1px solid #c6c6c6; color: #999; font-size: 12px; line-height: 18px; }
footer a { padding: 0 5px 0 9px; border-right: 1px solid #ccc; color: #999; }
footer a:first-child { padding-left: 5px; }
footer a:nth-child(n+4) { padding-left: 10px; }
footer span { padding-left: 5px; font-size: 13px; }
```
